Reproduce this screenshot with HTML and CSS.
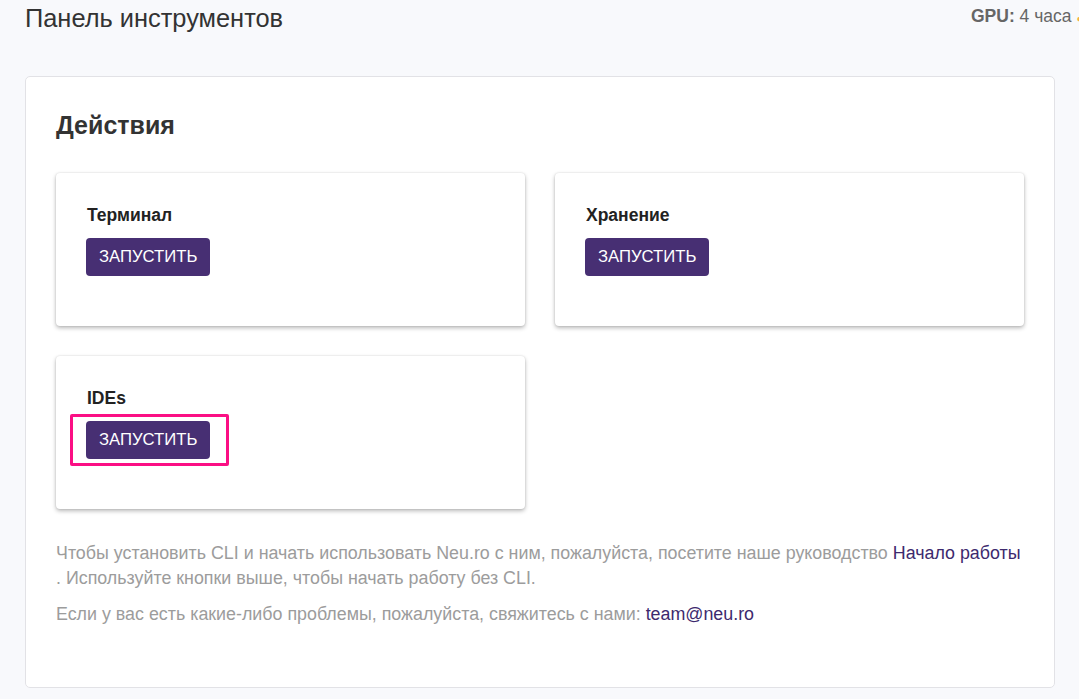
FILE: index.html
```html
<!DOCTYPE html>
<html lang="ru">
<head>
<meta charset="utf-8">
<title>Панель инструментов</title>
<link rel="stylesheet" href="styles.css">
</head>
<body>
<header class="topbar">
  <h1 class="page-title">Панель инструментов</h1>
  <div class="quota"><b>GPU:</b> 4 часа <span class="quota-mark">●</span></div>
</header>
<main class="panel">
  <h2 class="panel-title">Действия</h2>
  <div class="actions">
    <section class="action-card">
      <h3 class="action-title">Терминал</h3>
      <div class="btn-wrap"><button class="btn">ЗАПУСТИТЬ</button></div>
    </section>
    <section class="action-card">
      <h3 class="action-title">Хранение</h3>
      <div class="btn-wrap"><button class="btn">ЗАПУСТИТЬ</button></div>
    </section>
    <section class="action-card">
      <h3 class="action-title">IDEs</h3>
      <div class="btn-wrap"><button class="btn">ЗАПУСТИТЬ</button><span class="highlight"></span></div>
    </section>
  </div>
  <p class="note">Чтобы установить CLI и начать использовать Neu.ro с ним, пожалуйста, посетите наше руководство <a href="#">Начало работы</a> . Используйте кнопки выше, чтобы начать работу без CLI.</p>
  <p class="note note-last">Если у вас есть какие-либо проблемы, пожалуйста, свяжитесь с нами: <a href="#">team@neu.ro</a></p>
</main>
</body>
</html>
```
FILE: styles.css
```css
html, body {
  margin: 0;
  padding: 0;
}
body {
  background: #f8f9fc;
  font-family: "Liberation Sans", Arial, sans-serif;
  color: #333;
  overflow: hidden;
  width: 1079px;
  height: 699px;
}
.topbar {
  display: flex;
  justify-content: space-between;
  align-items: flex-start;
  padding: 1px 0 0 25px;
  height: 35px;
  white-space: nowrap;
}
.page-title {
  margin: 0;
  font-size: 25.4px;
  font-weight: normal;
  line-height: 35px;
  color: #333;
}
.quota {
  font-size: 17.5px;
  line-height: 31px;
  color: #666;
  width: 108px;
  overflow: hidden;
  flex: none;
}
.quota b {
  color: #666;
}
.quota-mark {
  color: #f5b041;
  font-size: 10px;
}
.panel {
  margin: 40px 24px 0 25px;
  background: #fff;
  border: 1px solid #e2e2e6;
  border-radius: 5px;
  padding: 33px 30px 60px 30px;
  height: 612px;
  box-sizing: border-box;
}
.panel-title {
  margin: 0 0 33px;
  font-size: 25px;
  font-weight: bold;
  line-height: 30px;
  color: #333;
}
.actions {
  display: grid;
  grid-template-columns: 469px 469px;
  gap: 30px;
}
.action-card {
  background: #fff;
  border-radius: 4px;
  box-shadow: 0 2px 4px rgba(0, 0, 0, 0.28), 0 0 2px rgba(0, 0, 0, 0.12);
  padding: 31px 31px 50px 30px;
  height: 153px;
  box-sizing: border-box;
}
.action-title {
  margin: 0 0 12px 1px;
  font-size: 17.5px;
  font-weight: bold;
  line-height: 22px;
  color: #222;
}
.btn-wrap {
  position: relative;
  display: inline-block;
}
.btn {
  display: block;
  height: 38px;
  padding: 0 13px;
  border: 0;
  border-radius: 4px;
  background: #472f73;
  color: #fff;
  font-family: "Liberation Sans", Arial, sans-serif;
  font-size: 16.7px;
  line-height: 38px;
}
.highlight {
  position: absolute;
  left: -16px;
  top: -7px;
  width: 159px;
  height: 52px;
  box-sizing: border-box;
  border: 3px solid #fb0f84;
  border-radius: 2px;
}
.note {
  margin: 32px 0 0;
  font-size: 17.85px;
  line-height: 25px;
  color: #9c9c9c;
}
.note-last {
  margin-top: 11px;
}
.note a {
  color: #3d2a6e;
  text-decoration: none;
}
```
